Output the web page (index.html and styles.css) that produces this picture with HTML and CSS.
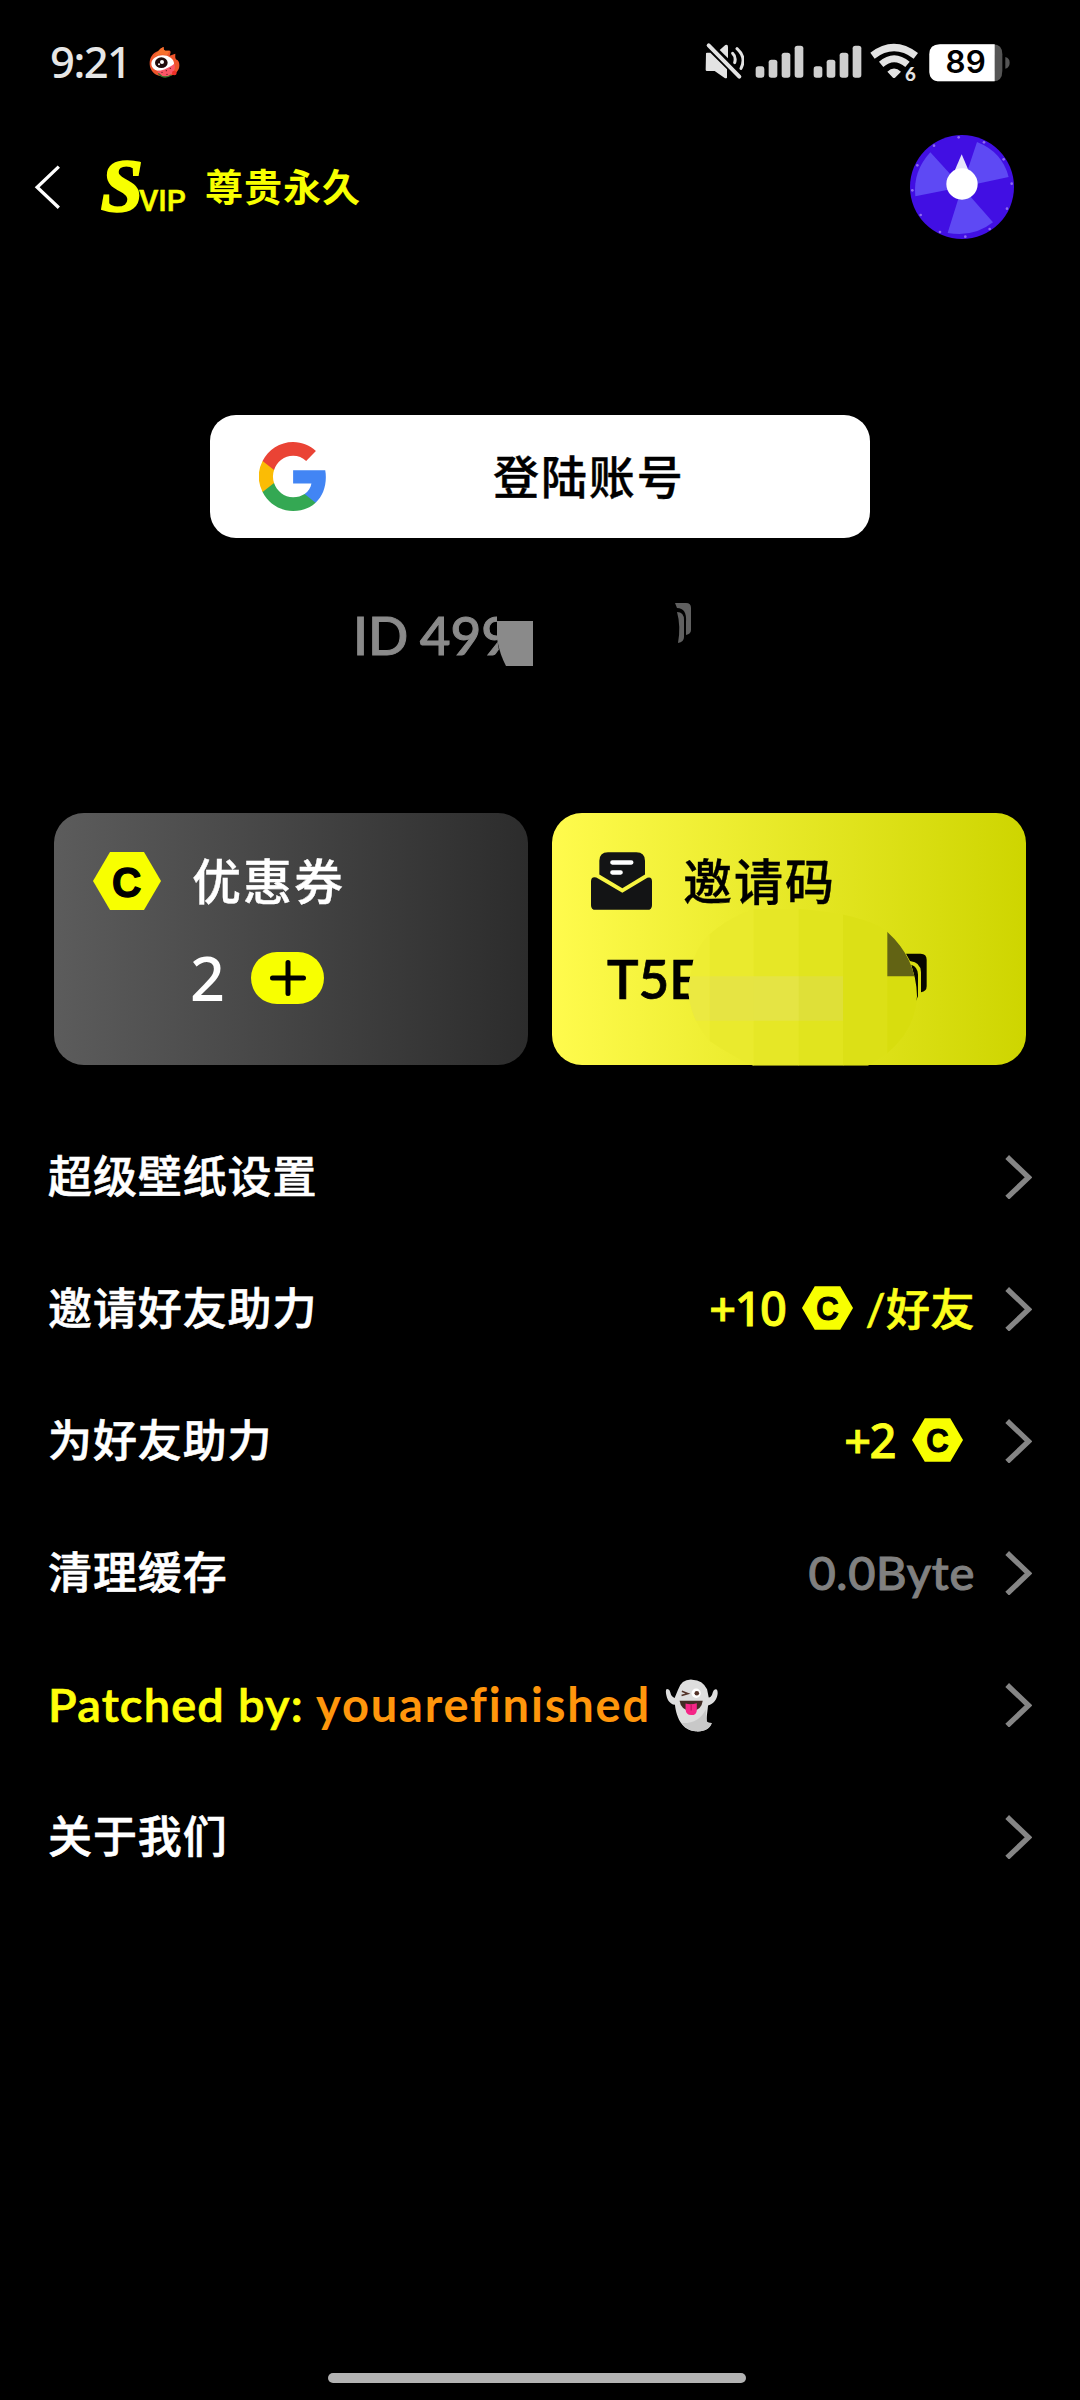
FILE: index.html
```html
<!DOCTYPE html>
<html lang="zh-CN">
<head>
<meta charset="utf-8">
<title>个人中心</title>
<link rel="stylesheet" href="styles.css">
</head>
<body>
<svg class="defs" width="0" height="0">
  <defs>
    <symbol id="coin" viewBox="0 0 204 174">
      <path d="M51 0H153L204 87L153 174H51L0 87Z" fill="#f8ff00"/>
      <text class="coin-letter" x="102" y="135" text-anchor="middle" textLength="90" lengthAdjust="spacingAndGlyphs">C</text>
    </symbol>
    <symbol id="next" viewBox="0 0 80 132">
      <path d="M6 6L70 67L6 128" fill="none" stroke="#858585" stroke-width="16"/>
    </symbol>
    <symbol id="bars" viewBox="225 61 147 129">
      <g fill="#cfcfcf"><rect x="227" y="137" width="26" height="34" rx="8"/><rect x="266" y="117" width="26" height="54" rx="8"/><rect x="305" y="96" width="26" height="75" rx="8"/><rect x="344" y="75" width="26" height="96" rx="8"/></g>
    </symbol>
  </defs>
</svg>

<header class="status">
  <span class="time">9:21</span>
  <svg class="weibo" viewBox="0 0 96 96">
    <path d="M5 55C4 34 15 20 31 15C36 10 40 5 47 3C46 9 48 13 52 14L65 14C70 16 67 24 65 29L82 23C82 33 80 38 89 43C96 50 96 68 88 76C79 89 57 95 40 91C21 89 6 75 5 55Z" fill="#ee542b"/>
    <path d="M31 15C36 10 40 5 47 3C46 9 48 13 52 14L65 14L57 28C38 22 22 27 11 40Z" fill="#f5712e"/>
    <ellipse cx="44" cy="53" rx="34" ry="25" fill="#fff"/>
    <ellipse cx="40" cy="50" rx="19" ry="16" fill="#200c0c"/>
    <circle cx="42" cy="48" r="6" fill="#fff"/><circle cx="33" cy="55" r="3" fill="#fff"/>
    <path d="M28 73C41 76 61 66 79 53C87 76 66 94 46 92Q32 89 28 73Z" fill="#fb5767"/>
    <path d="M31 82Q47 101 70 87" fill="none" stroke="#39752e" stroke-width="4"/>
    <g fill="#621d24"><circle cx="42" cy="79" r="2"/><circle cx="55" cy="74" r="2"/><circle cx="67" cy="67" r="2"/><circle cx="57" cy="85" r="2"/></g>
    <circle cx="79" cy="81" r="7" fill="#ee3028"/>
  </svg>
  <div class="tray">
    <svg class="mute" viewBox="75 61 117 129">
      <path d="M78 98Q78 96 81 96H91L141 146V171Q138 175 133 171L104 151H81Q77 151 77 147Z" fill="#e3e3e3"/>
      <path d="M119 88L136 73Q144 70 144 78V113Z" fill="#e3e3e3"/>
      <g fill="none" stroke="#e3e3e3" stroke-linecap="round"><path d="M86 74L178 168" stroke-width="12"/><path d="M158 98Q169 108 164 126M171 84Q200 110 183 143" stroke-width="9"/></g>
    </svg>
    <svg class="signal"><use href="#bars"/></svg>
    <svg class="signal second"><use href="#bars"/></svg>
    <svg class="wifi" viewBox="570 61 144 129">
      <path d="M571 96Q642 42 714 97L701 114Q642 70 584 114Z M597 123Q642 84 689 123L676 139Q642 111 610 139Z M622 153Q642 134 663 153L645 171Q642 173 639 171Z" fill="#e3e3e3"/>
      <text class="wifi-gen" x="675" y="181">6</text>
    </svg>
    <svg class="battery" viewBox="747 61 246 129">
      <path d="M780 71H940Q967 71 967 101V151Q967 182 940 182H780Q748 182 748 151V101Q748 71 780 71Z" fill="#555"/>
      <path d="M944 71V182H780Q748 182 748 151V101Q748 71 780 71Z" fill="#fff"/>
      <path d="M976 109Q989 112 989 126Q989 140 976 144Z" fill="#555"/>
      <text class="charge" x="857" y="158" text-anchor="middle">89</text>
    </svg>
  </div>
</header>

<nav class="top">
  <svg class="back" viewBox="100 435 80 132"><path d="M174 440L109 502L174 563" fill="none" stroke="#fff" stroke-width="10"/></svg>
  <div class="svip"><span class="s">S</span><span class="vip">VIP</span></div>
  <span class="rank">尊贵永久</span>
  <svg class="wheel" viewBox="689 346 312 312">
    <circle cx="845" cy="502" r="156" fill="#410fe3"/>
    <g fill="#5e49f4"><path d="M845 502L890 367Q966 397 985 472Z"/><path d="M845 502L750 398Q697 455 705 530Z"/><path d="M845 502L938 608Q880 654 802 640Z"/></g>
    <g fill="#8d6bf0"><circle cx="835" cy="353" r="4"/><circle cx="911" cy="368" r="4"/><circle cx="970" cy="419" r="4"/><circle cx="994" cy="492" r="4"/><circle cx="980" cy="567" r="4"/><circle cx="928" cy="628" r="4"/><circle cx="855" cy="651" r="4"/><circle cx="779" cy="637" r="4"/><circle cx="721" cy="586" r="4"/><circle cx="696" cy="512" r="4"/><circle cx="711" cy="437" r="4"/><circle cx="761" cy="378" r="4"/></g>
    <path d="M844 404L868 460H820Z" fill="#e6e4fc"/><circle cx="845" cy="493" r="47" fill="#fff"/>
  </svg>
</nav>

<main>
  <button class="login">
    <svg class="google" viewBox="2 2 43.200 44" preserveAspectRatio="none">
      <path fill="#4285f4" d="M45.1 24.5c0-1.6-.1-3.1-.4-4.5H24v8.5h11.8c-.5 2.8-2.1 5.1-4.4 6.7v5.5h7.1c4.2-3.8 6.6-9.5 6.6-16.2z"/>
      <path fill="#34a853" d="M24 46c5.9 0 10.9-2 14.5-5.3l-7.1-5.5c-2 1.3-4.5 2.1-7.4 2.1-5.7 0-10.5-3.9-12.3-9.1H4.3v5.7C8 41.1 15.4 46 24 46z"/>
      <path fill="#fbbc05" d="M11.7 28.2A13.2 13.2 0 0 1 11.7 19.8v-5.7H4.3a22 22 0 0 0 0 19.8z"/>
      <path fill="#ea4335" d="M24 10.8c3.2 0 6.1 1.1 8.4 3.3l6.3-6.3C34.9 4.2 29.9 2 24 2 15.4 2 8 6.9 4.3 14.1l7.4 5.7c1.8-5.2 6.6-9 12.3-9z"/>
    </svg>
    <span class="login-text">登陆账号</span>
  </button>

  <div class="id-row">
    <span class="id-text">ID 499</span>
    <svg class="id-mask" viewBox="0 0 240 80">
      <path d="M0 0H240V80H13Q1 58 0 35Z" fill="#000"/>
      <path d="M0 21H36V66H9Q3 55 0 39Z" fill="#8a8a8a"/>
      <path d="M178 3H189Q194 3 194 8V30Q194 34 189 35V22Q190 8 180 8ZM180 12Q187 12 187 20V37Q187 42 181 43Q184 26 180 12Z" fill="#606060"/>
    </svg>
  </div>

  <section class="cards">
    <div class="card coupon">
      <div class="card-head"><svg class="coin-large"><use href="#coin"/></svg><span class="card-title">优惠券</span></div>
      <div class="count-row"><span class="count">2</span><span class="add"><svg viewBox="0 0 36 36"><path d="M18 2.500V33.500M2.500 18H33.500" stroke="#000" stroke-width="5" stroke-linecap="round"/></svg></span></div>
    </div>
    <div class="card invite">
      <div class="card-head">
        <svg class="mail" viewBox="153 156 183 173">
          <path d="M204 156H289Q315 156 315 182V223L247 264L178 223V182Q178 156 204 156Z" fill="#131415"/>
          <path d="M153 244Q153 228 169 232L247 278L322 233Q336 229 336 244V315Q336 329 322 329H167Q153 329 153 315Z" fill="#131415"/>
          <path d="M217 187H274M217 217H242" stroke="#fff" stroke-width="13" stroke-linecap="round"/>
        </svg>
        <span class="card-title">邀请码</span>
      </div>
      <div class="code">T5E</div>
      <svg class="mosaic" viewBox="445 325 720 474">
        <path d="M1099 462H1143Q1161 462 1161 480V560Q1161 575 1144 578V518Q1144 488 1111 484Z" fill="#070700"/>
        <path d="M1115 495Q1135 502 1135 525V590L1129 603Q1130 550 1115 495Z" fill="#070700"/>
        <clipPath id="blob"><path d="M642 328H777Q980 344 1043 397Q1130 475 1132 590Q1127 690 1043 760L985 798H640Q570 765 510 724Q445 650 446 560L461 480Q482 420 530 387Q580 350 642 328Z"/></clipPath>
        <g clip-path="url(#blob)">
          <path d="M440 320H510V800H440Z" fill="#eeed33"/><path d="M510 320H643V800H510Z" fill="#eaea2d"/><path d="M642 320H778V800H642Z" fill="#e6e726"/><path d="M777 320H911V800H777Z" fill="#e1e41e"/><path d="M910 320H1044V800H910Z" fill="#dce016"/><path d="M1043 320H1165V800H1043Z" fill="#d8dd0e"/>
          <path d="M440 530H510V663H440Z" fill="#ebe941"/><path d="M510 530H643V663H510Z" fill="#e6e443"/><path d="M642 530H778V663H642Z" fill="#e5e444"/><path d="M777 530H910V663H777Z" fill="#dfe038"/>
          <path d="M1043 380H1165V530H1043Z" fill="#626314"/>
        </g>
      </svg>
    </div>
  </section>

  <section class="list">
    <div class="row"><span class="label">超级壁纸设置</span><svg class="next"><use href="#next"/></svg></div>
    <div class="row"><span class="label">邀请好友助力</span><div class="value gold"><span class="num">+10</span><svg class="coin-small"><use href="#coin"/></svg><span class="unit">/好友</span></div><svg class="next"><use href="#next"/></svg></div>
    <div class="row"><span class="label">为好友助力</span><div class="value gold two"><span class="num">+2</span><svg class="coin-small"><use href="#coin"/></svg></div><svg class="next"><use href="#next"/></svg></div>
    <div class="row"><span class="label">清理缓存</span><span class="value cache">0.0Byte</span><svg class="next"><use href="#next"/></svg></div>
    <div class="row"><span class="patched">Patched by:</span><span class="author">youarefinished</span>
      <svg class="ghost" viewBox="30 27 160 160">
        <path d="M60 105C43 103 35 87 33 70Q31 53 41 59C49 65 44 79 59 84L69 60Q80 27 112 29Q144 30 157 58L162 83C174 81 172 67 178 60Q189 53 189 70C188 87 177 103 160 107C158 127 155 144 156 155Q160 160 171 160C167 176 150 187 122 185C84 183 65 148 60 105Z" fill="#dedede"/>
        <path d="M81 160Q132 162 153 119Q154 139 156 155Q160 160 171 160C167 176 150 187 122 185Q96 182 81 160Z" fill="#c8c8c8"/>
        <path d="M74 93H144Q140 124 109 124Q78 122 74 93Z" fill="#422b24"/>
        <path d="M92 101Q108 106 126 100V121Q126 136 109 136Q93 135 92 118Z" fill="#f52587"/>
        <path d="M109 105V122" stroke="#c51664" stroke-width="4"/>
        <circle cx="124" cy="70" r="14" fill="#fff"/><circle cx="126" cy="70" r="7" fill="#543429"/>
        <path d="M81 64L99 71L80 77" fill="none" stroke="#543429" stroke-width="5"/>
      </svg><svg class="next"><use href="#next"/></svg></div>
    <div class="row"><span class="label">关于我们</span><svg class="next"><use href="#next"/></svg></div>
  </section>
</main>
<footer><div class="home-bar"></div></footer>
</body>
</html>
```
FILE: styles.css
```css
* { box-sizing: border-box; }
body {
  margin: 0;
  width: 1080px;
  height: 2400px;
  display: flex;
  flex-direction: column;
  overflow: hidden;
  background: #000;
  color: #fff;
  font-family: Lato, "Noto Sans CJK SC", sans-serif;
  font-variant-ligatures: none;
  white-space: nowrap;
}
svg { display: block; flex: none; }
.defs { height: 0; }

.status { height: 124px; display: flex; align-items: center; padding: 0 69px 0 50px; flex: none; }
.time { width: 98px; padding-bottom: 3px; color: #e6e6e6; font: 500 43.500px/60px "Noto Sans", sans-serif; letter-spacing: -1.500px; }
.weibo { width: 32px; height: 32px; }
.tray { display: flex; margin-left: auto; }
.tray svg { height: 43px; }
.mute { width: 39px; }
.signal { width: 49px; margin-left: 11px; }
.second { margin-left: 9px; }
.wifi { width: 48px; margin-left: 8px; }
.battery { width: 82px; margin-left: 11px; }
.wifi-gen { font: 900 56px Lato, sans-serif; fill: #e3e3e3; }
.charge { font: 600 94px Inter, sans-serif; fill: #000; }

.top { height: 126px; display: flex; align-items: center; padding: 0 66px 0 34px; flex: none; }
.back { width: 27px; height: 44px; }
.svip { width: 144px; padding: 0 0 2px 40px; display: flex; align-items: baseline; color: #f8ff00; }
.s { width: 38px; font: italic 700 75px/80px "Liberation Serif", serif; -webkit-text-stroke: 2.500px #f8ff00; }
.vip { font: 500 30px/40px Roboto, sans-serif; -webkit-text-stroke: 0.500px #f8ff00; }
.rank { padding-bottom: 6px; color: #f8ff00; font-size: 38px; font-weight: 700; letter-spacing: 1px; }
.wheel { width: 104px; height: 104px; margin-left: auto; }

main { padding-top: 165px; }
.login { display: flex; align-items: center; width: 660px; height: 123px; margin: 0 auto; padding: 0 0 0 49px; border: 0; border-radius: 26px; background: #fff; color: #000; font-family: inherit; }
.google { width: 67px; height: 69px; }
.login-text { margin-left: 167px; padding-bottom: 6px; font-size: 46px; font-weight: 500; letter-spacing: 1.900px; -webkit-text-stroke: 0.400px; }

.id-row { position: relative; height: 275px; padding: 61px 0 0 353px; color: #8a8a8a; }
.id-text { display: block; font-size: 53px; line-height: 72px; font-weight: 500; word-spacing: -2px; -webkit-text-stroke: 1px; }
.id-mask { position: absolute; left: 497px; top: 62px; width: 240px; height: 80px; }

.cards { display: flex; justify-content: space-between; padding: 0 54px; }
.card { position: relative; width: 474px; height: 252px; border-radius: 30px; }
.coupon { background: linear-gradient(90deg, #5c5c5c, #2c2c2c); padding: 39px 39px 0; }
.invite { background: linear-gradient(90deg, #fffb4d, #ced500); padding: 39px 39px 0; color: #000; }
.card-head { display: flex; align-items: center; height: 58px; font-size: 49px; font-weight: 500; letter-spacing: 2px; }
.card-title { padding-bottom: 6px; -webkit-text-stroke: 0.400px; }
.coin-large { width: 68px; height: 58px; margin-right: 31px; }
.mail { width: 61px; height: 58px; margin-right: 31px; }
.coin-letter { font: 700 130px "Liberation Sans", sans-serif; fill: #000; stroke: #000; stroke-width: 4; stroke-linejoin: round; }
.count-row { display: flex; align-items: center; height: 52px; margin-top: 42px; padding-left: 97px; }
.count { width: 61px; padding-bottom: 2px; font-size: 61px; font-family: "Noto Sans", sans-serif; font-weight: 500; }
.add { display: flex; align-items: center; justify-content: center; width: 73px; height: 52px; border-radius: 26px; background: #f8ff00; }
.add svg { width: 36px; height: 36px; }
.code { margin: 34px 0 0 16px; font-size: 53px; line-height: 70px; font-weight: 600; -webkit-text-stroke: 0.700px; }
.mosaic { position: absolute; left: 136px; top: 95px; width: 240px; height: 158px; }

.list { padding-top: 46px; }
.row { display: flex; align-items: center; height: 132px; padding: 0 48px; }
.label { padding-bottom: 6px; font-size: 44px; font-weight: 500; letter-spacing: 0.900px; -webkit-text-stroke: 0.600px; }
.next { width: 27px; height: 44px; margin-left: auto; }
.value { margin-left: auto; }
.value + .next { margin-left: 30px; }
.gold { display: flex; align-items: center; color: #fcff1c; font-size: 44px; font-weight: 500; }
.num { padding-bottom: 3px; font: 500 47px/60px "Noto Sans", sans-serif; letter-spacing: -1.500px; -webkit-text-stroke: 0.900px; }
.coin-small { width: 51px; height: 46px; margin: 0 12px 2px 17px; }
.unit { padding-bottom: 5px; letter-spacing: 0.500px; -webkit-text-stroke: 0.600px; }
.two + .next { margin-left: 30px; }
.cache { padding-bottom: 2px; color: #808080; font-size: 47px; font-weight: 500; letter-spacing: 0.700px; -webkit-text-stroke: 1px; }
.patched { width: 268px; padding-bottom: 2px; color: #ffff0a; font-size: 47px; font-weight: 600; letter-spacing: 1.200px; -webkit-text-stroke: 0.700px; }
.author { padding-bottom: 2px; color: #ff960c; font-size: 47px; font-weight: 700; letter-spacing: 1.850px; }
.ghost { width: 53px; height: 53px; margin-left: 14px; }

footer { display: flex; justify-content: center; margin-top: auto; padding-bottom: 17px; padding-right: 6px; }
.home-bar { width: 418px; height: 10px; border-radius: 5px; background: #b3b3b3; }
```
